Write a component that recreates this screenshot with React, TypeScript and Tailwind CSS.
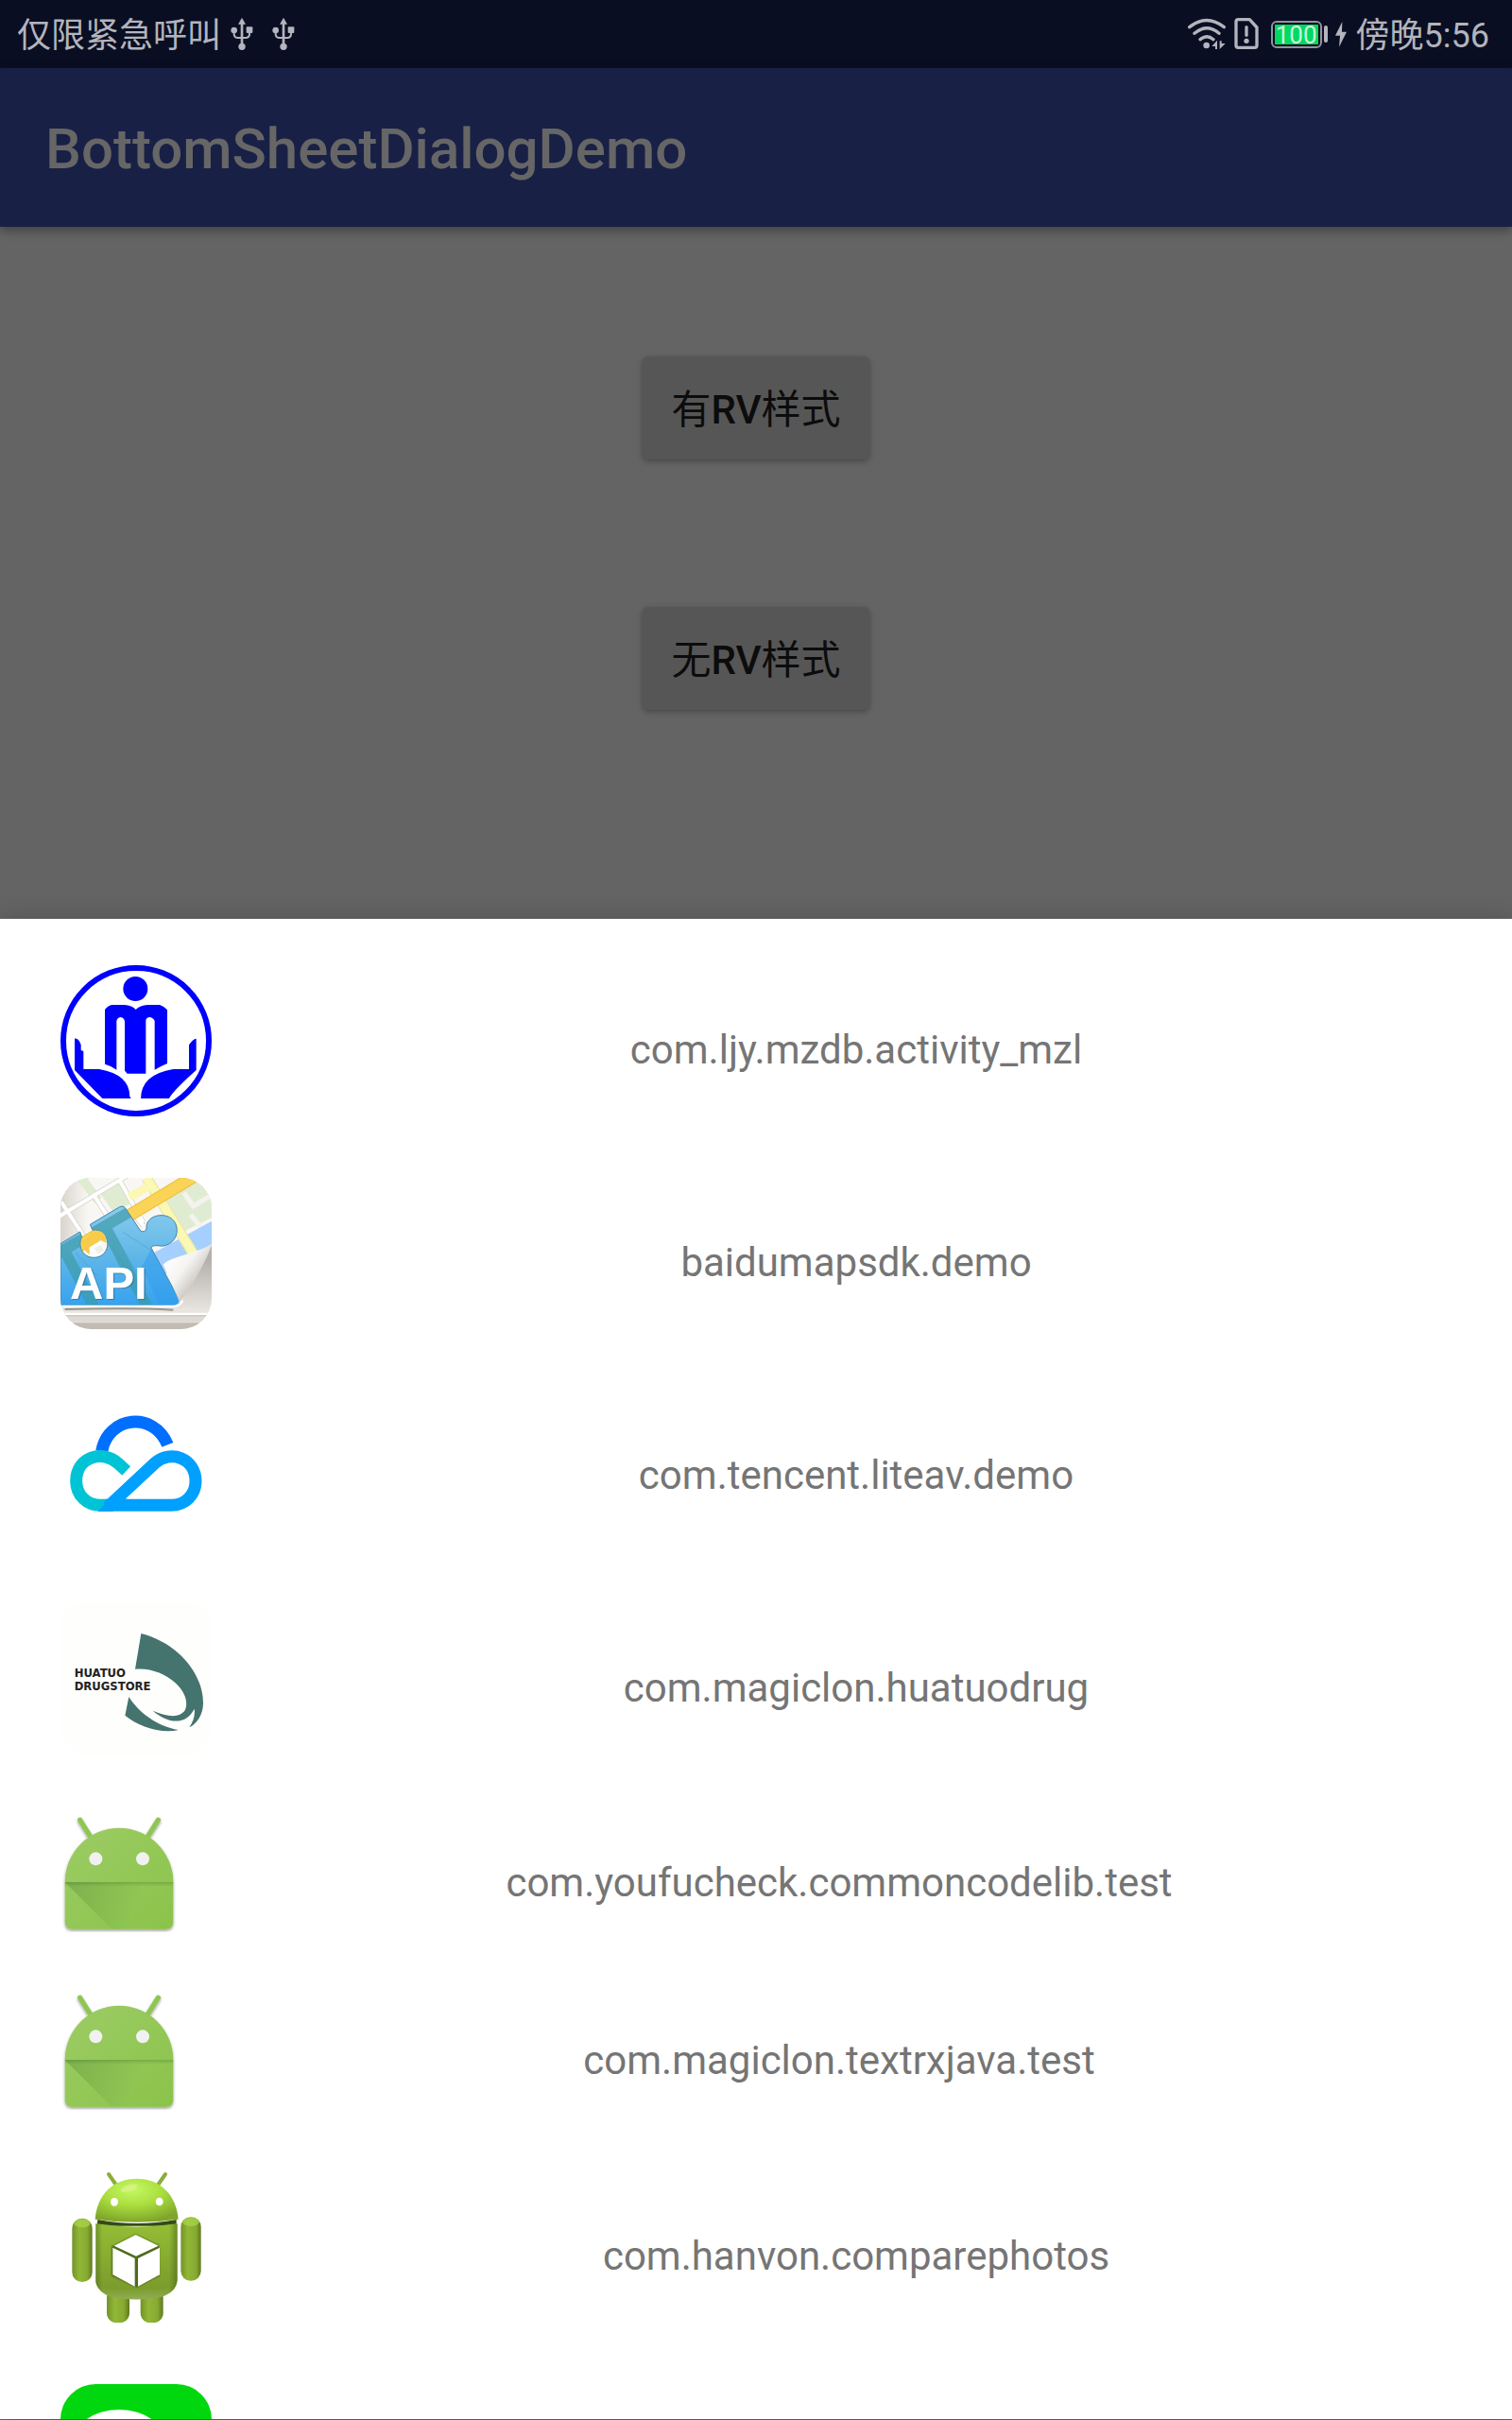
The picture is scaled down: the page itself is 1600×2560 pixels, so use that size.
import { useId, type ReactNode } from "react";

function UsbIcon() {
  return (
    <svg aria-hidden="true" className="h-9 w-6" viewBox="734 56 72 108" fill="#b3b4bd" stroke="#b3b4bd">
      <path d="M770 76V150" strokeWidth="8" fill="none" />
      <path d="M745 98V110Q745 121 756 122H784Q794 121 794 110V98" strokeWidth="6" fill="none" />
      <path d="M770 58L782 79H758Z" stroke="none" />
      <circle cx="745" cy="98" r="10" stroke="none" />
      <rect x="784" y="87" width="20" height="20" rx="3" stroke="none" />
      <circle cx="770" cy="150" r="11" stroke="none" />
    </svg>
  );
}

function WifiIcon() {
  return (
    <svg aria-hidden="true" className="h-9 w-10" viewBox="106 54 120 108" fill="none" stroke="#b3b4bd" strokeWidth="10" strokeLinecap="round">
      <path d="M111 86Q166 43 221 86" />
      <path d="M127 106Q166 73 205 106" />
      <path d="M145 125Q166 107 187 125" />
      <circle cx="165" cy="144" r="10" fill="#b3b4bd" stroke="none" />
      <path d="M199 128V156H193V147H182ZM207 156V130H213V138H225Z" fill="#b3b4bd" stroke="none" />
    </svg>
  );
}

function SimIcon() {
  return (
    <svg aria-hidden="true" className="h-9 w-7" viewBox="250 54 84 108" fill="none" stroke="#b3b4bd" strokeWidth="10">
      <path d="M266 62H302L325 87V144Q325 151 318 151H266Q259 151 259 144V69Q259 62 266 62Z" strokeLinejoin="round" />
      <path d="M292 86V112" strokeLinecap="round" />
      <circle cx="292" cy="130" r="8" fill="#b3b4bd" stroke="none" />
    </svg>
  );
}

function Battery() {
  return (
    <div className="flex items-center gap-0.5">
      <div className="flex h-[29px] w-[54px] rounded-md border-2 border-[#92939e] p-0.5">
        <span className="flex-1 bg-[#00d95f] text-center text-[26px] leading-[22px] text-[#c9f5da]">100</span>
      </div>
      <span className="h-[18px] w-1 rounded-sm bg-[#b3b4bd]" />
      <svg aria-hidden="true" className="ml-1 h-7 w-4" viewBox="578 64 44 84">
        <path d="M604 67L582 111H597L594 147L618 99H603Z" fill="#b3b4bd" />
      </svg>
    </div>
  );
}

function CivilIcon() {
  return (
    <svg aria-hidden="true" className="size-40" viewBox="72 183 480 480" fill="#0000ff">
      <circle cx="312" cy="423" r="231" fill="none" stroke="#0000ff" strokeWidth="18" />
      <circle cx="310" cy="258" r="39" />
      <path d="M213 324Q225 309 238 309H274Q300 311 311 324Q324 311 349 309H387Q400 313 411 325V495Q392 503 371 515V360Q366 349 354 348Q343 349 343 361V527H284L276 518V361Q274 350 263 348Q251 350 250 361V515Q235 503 213 497Z" />
      <path d="M117 416Q130 414 137 436V453L145 456V513H195Q292 530 292 600L296 606H205L117 516Z" />
      <path d="M503 416Q493 417 480 436V453V513H430Q328 530 327 606H417Q428 583 503 516Z" />
    </svg>
  );
}

function MapApiIcon() {
  return (
    <svg aria-hidden="true" className="size-40" viewBox="72 78 480 480">
      <defs>
        <clipPath id="map-tile"><rect x="72" y="78" width="480" height="480" rx="98" /></clipPath>
        <clipPath id="map-sheet"><path d="M72 78H552V290L450 482Q443 488 428 488H72Z" /></clipPath>
        <linearGradient id="puzzle" x1="0" y1="0" x2="0" y2="1">
          <stop offset="0" stopColor="#8bcbee" />
          <stop offset="0.45" stopColor="#64b9e8" />
          <stop offset="1" stopColor="#37a2ee" />
        </linearGradient>
        <linearGradient id="curl" x1="405" y1="340" x2="505" y2="415" gradientUnits="userSpaceOnUse">
          <stop offset="0" stopColor="#ffffff" />
          <stop offset="0.5" stopColor="#f5f4f2" />
          <stop offset="1" stopColor="#c9c4be" />
        </linearGradient>
        <linearGradient id="fold" x1="72" y1="0" x2="160" y2="0" gradientUnits="userSpaceOnUse">
          <stop offset="0" stopColor="#d9d4cd" />
          <stop offset="1" stopColor="#f9f7f3" />
        </linearGradient>
        <linearGradient id="paper" x1="0" y1="340" x2="0" y2="500" gradientUnits="userSpaceOnUse">
          <stop offset="0" stopColor="#b5b1ac" />
          <stop offset="1" stopColor="#e8e5e0" />
        </linearGradient>
        <path id="piece" d="M72 287L134 249L140 266C126 290 140 331 178 331C211 331 231 298 217 268C207 245 187 241 174 244L166 226L260 170Q271 164 278 174L326 246Q339 253 345 240C342 210 370 195 396 197C430 199 446 227 441 254C436 281 408 300 381 293Q358 292 361 302L449 464Q453 482 436 483H72Z" />
        <clipPath id="piece-clip"><use href="#piece" /></clipPath>
      </defs>
      <g clipPath="url(#map-tile)">
        <rect x="72" y="78" width="480" height="480" fill="url(#paper)" />
        <g clipPath="url(#map-sheet)">
          <rect x="72" y="78" width="480" height="410" fill="url(#fold)" />
          <path d="M127 88L156 78L202 140L182 160ZM194 122L262 88L306 152L242 190ZM392 150L490 88L552 100V205L450 255Z" fill="#dfecd2" />
          <path d="M464 125L495 168L552 132M485 195L518 235M470 135L494 168L520 150" fill="none" stroke="#f5f3ee" strokeWidth="15" />
          <path d="M370 315L552 215V310L400 385Z" fill="#a5cfff" />
          <path d="M60 205L285 70M175 128L250 245M75 155L150 270M262 90L335 220M290 175L335 230" fill="none" stroke="#d8d5cf" strokeWidth="17" />
          <path d="M60 205L285 70M175 128L250 245M75 155L150 270M262 90L335 220M290 175L335 230" fill="none" stroke="#fff" strokeWidth="12" />
          <path d="M345 78L510 345" stroke="#e9e6a7" strokeWidth="34" />
          <path d="M345 78L510 345M290 140L360 100" stroke="#fbf8b4" strokeWidth="27" />
          <path d="M120 300L505 68" stroke="#eebd3d" strokeWidth="40" />
          <path d="M120 300L505 68" stroke="#fad456" strokeWidth="34" />
        </g>
        <use href="#piece" fill="url(#puzzle)" stroke="#4086ad" strokeWidth="3" />
        <g clipPath="url(#piece-clip)" fill="none">
          <path d="M60 320L310 175M218 240L345 485M85 310L180 490" stroke="#3c9aa3" strokeOpacity="0.65" strokeWidth="35" />
          <path d="M235 290L325 440M250 270L345 430M270 250L370 315M120 315L190 390" stroke="#4598c1" strokeOpacity="0.5" strokeWidth="3" />
          <path d="M361 302L449 464V490H390L330 360Z" fill="#2f9bed" fillOpacity="0.5" />
        </g>
        <path d="M138 280L178 248Q205 240 216 266L218 285L200 276L164 298L166 322Q140 307 138 280Z" fill="#f9cb4b" />
        <path d="M164 299L198 280L214 309Q188 337 165 322Z" fill="#fff" />
        <path d="M180 301L200 290L211 309L190 320Z" fill="#f2efe8" />
        <path d="M398 354Q402 343 444 329Q525 307 554 286Q530 353 482 428Q447 487 421 490Q454 482 446 462Z" fill="url(#curl)" />
        <path d="M76 486H430Q448 486 460 468" fill="none" stroke="#fff" strokeWidth="7" />
        <path d="M86 490H430L555 498V560H60V505H95Z" fill="#e8e5df" />
        <path d="M86 495Q300 490 430 497" fill="none" stroke="#989590" strokeWidth="6" />
        <path d="M72 510H552" stroke="#fffefd" strokeWidth="8" />
        <path d="M72 516H552" stroke="#b6b2ac" strokeWidth="3" />
        <rect x="72" y="518" width="480" height="18" fill="#dedad3" />
        <rect x="72" y="538" width="480" height="22" fill="#c1bbb4" />
        <text x="106" y="465" fill="#2c6b93" fillOpacity="0.6" fontFamily="Liberation Sans" fontWeight="700" fontSize="147">API</text>
        <text x="102" y="461" fill="#fff" fontFamily="Liberation Sans" fontWeight="700" fontSize="147">API</text>
      </g>
    </svg>
  );
}

function CloudIcon() {
  return (
    <svg aria-hidden="true" className="size-40" viewBox="72 33 480 480" fill="none" strokeWidth="39">
      <path d="M203 226C222 114 368 97 412 205" stroke="#006eff" />
      <path d="M281 288L255 264C207 220 122 242 122 320C122 365 156 397 199 397H240" stroke="#00c4d5" />
      <path d="M215 397H424C470 397 501 362 501 321C501 247 421 220 372 263L222 403" stroke="#00a0ff" />
      <path d="M190 417L228 377H285L235 417Z" fill="#00a0ff" stroke="none" />
    </svg>
  );
}

function DrugstoreIcon() {
  return (
    <svg aria-hidden="true" className="size-40" viewBox="72 18 480 480" fill="#45736e">
      <rect x="72" y="18" width="480" height="480" rx="80" fill="#fefefc" />
      <path d="M328 114C448 145 526 244 525 337C524 370 508 399 481 412C494 393 500 373 497 353C470 407 413 400 365 359C412 379 450 383 467 358C493 300 403 218 309 227Z" />
      <path d="M289 315C319 363 378 409 447 420C391 433 317 408 277 374Z" />
      <g fill="#222" fontFamily="DejaVu Sans" fontWeight="700" fontSize="35">
        <text x="116" y="253">HUATUO</text>
        <text x="116" y="295">DRUGSTORE</text>
      </g>
    </svg>
  );
}

function RobotHeadIcon() {
  const id = useId();
  return (
    <svg aria-hidden="true" className="size-[124px]" viewBox="72 60 372 372">
      <defs>
        <linearGradient id={`${id}head`} x1="0" y1="0" x2="1" y2="1">
          <stop offset="0" stopColor="#9ccc65" />
          <stop offset="1" stopColor="#8bc34a" />
        </linearGradient>
        <linearGradient id={`${id}fade`} x1="100" y1="280" x2="310" y2="350" gradientUnits="userSpaceOnUse">
          <stop offset="0" stopColor="#33691e" stopOpacity="0.25" />
          <stop offset="1" stopColor="#33691e" stopOpacity="0" />
        </linearGradient>
        <linearGradient id={`${id}seam`} x1="0" y1="0" x2="0" y2="1">
          <stop offset="0" stopColor="#33691e" stopOpacity="0.28" />
          <stop offset="1" stopColor="#33691e" stopOpacity="0" />
        </linearGradient>
        <filter id={`${id}drop`} x="-10%" y="-10%" width="120%" height="120%">
          <feDropShadow dx="0" dy="5" stdDeviation="4" floodColor="#000" floodOpacity="0.4" />
        </filter>
      </defs>
      <g filter={`url(#${id}drop)`}>
        <path d="M134 76L170 133M382 76L346 133" stroke="#8fc652" strokeWidth="16" strokeLinecap="round" />
        <path d="M86 273A172 172 0 0 1 430 273V400Q430 422 408 422H108Q86 422 86 400Z" fill={`url(#${id}head)`} />
      </g>
      <path d="M86 273H430V422H235Z" fill={`url(#${id}fade)`} />
      <rect x="86" y="273" width="344" height="14" fill={`url(#${id}seam)`} />
      <circle cx="184" cy="199" r="21" fill="#f1f1f1" />
      <circle cx="333" cy="199" r="21" fill="#f1f1f1" />
    </svg>
  );
}

function RobotBoxIcon() {
  return (
    <svg aria-hidden="true" className="size-40" viewBox="72 81 480 480">
      <defs>
        <radialGradient id="dome" cx="0.45" cy="0.25" r="0.75">
          <stop offset="0" stopColor="#c4fb62" />
          <stop offset="0.5" stopColor="#a9dc3e" />
          <stop offset="1" stopColor="#7fa62c" />
        </radialGradient>
        <linearGradient id="torso" x1="0" y1="0" x2="0" y2="1">
          <stop offset="0" stopColor="#95bd35" />
          <stop offset="0.85" stopColor="#7b9c2c" />
          <stop offset="1" stopColor="#91ad55" />
        </linearGradient>
        <linearGradient id="limb" x1="0" y1="0" x2="1" y2="0">
          <stop offset="0" stopColor="#739329" />
          <stop offset="0.35" stopColor="#91b736" />
          <stop offset="0.75" stopColor="#87aa31" />
          <stop offset="1" stopColor="#5d7820" />
        </linearGradient>
        <linearGradient id="side-shade" x1="0" y1="0" x2="1" y2="0">
          <stop offset="0" stopColor="#405716" stopOpacity="0.45" />
          <stop offset="0.08" stopColor="#405716" stopOpacity="0" />
          <stop offset="0.9" stopColor="#405716" stopOpacity="0" />
          <stop offset="1" stopColor="#405716" stopOpacity="0.5" />
        </linearGradient>
      </defs>
      <path d="M225 90L248 123M405 90L382 123" stroke="#8bad3b" strokeWidth="12" strokeLinecap="round" />
      <rect x="219" y="450" width="72" height="112" rx="32" fill="url(#limb)" />
      <rect x="326" y="450" width="72" height="112" rx="32" fill="url(#limb)" />
      <rect x="109" y="230" width="64" height="202" rx="31" fill="url(#limb)" />
      <rect x="454" y="226" width="64" height="202" rx="31" fill="url(#limb)" />
      <ellipse cx="141" cy="246" rx="26" ry="13" fill="#a9d94a" fillOpacity="0.7" />
      <ellipse cx="486" cy="242" rx="26" ry="13" fill="#a9d94a" fillOpacity="0.7" />
      <path d="M190 234Q314 258 440 234V254H188Z" fill="#354a16" />
      <path d="M184 247Q314 266 443 247V425Q440 465 390 480Q313 495 235 480Q190 465 184 432Z" fill="url(#torso)" />
      <path d="M184 247Q314 266 443 247V425Q440 465 390 480Q313 495 235 480Q190 465 184 432Z" fill="url(#side-shade)" />
      <path d="M182 233C188 153 240 104 314 104C389 104 440 156 446 233Q314 252 182 233Z" fill="url(#dome)" />
      <ellipse cx="290" cy="134" rx="28" ry="10" transform="rotate(-18 290 134)" fill="#e7efa0" fillOpacity="0.55" />
      <ellipse cx="243" cy="178" rx="12" ry="13" fill="#fff" />
      <ellipse cx="386" cy="177" rx="12" ry="13" fill="#fff" />
      <path d="M311 282L384 317V412L314 448L236 412V320Z" fill="#4f6b1c" stroke="#4f6b1c" strokeOpacity="0.4" strokeWidth="8" />
      <path d="M311 282L383 317L312 350L242 317Z" fill="#fff" />
      <path d="M238 323L308 357V446L238 409Z" fill="#fff" />
      <path d="M387 323L318 357V446L387 409Z" fill="#fff" />
    </svg>
  );
}

function GreenChatIcon() {
  return (
    <svg aria-hidden="true" className="size-40" viewBox="72 756 480 480">
      <rect x="72" y="756" width="480" height="480" rx="112" fill="#00d70f" />
      <ellipse cx="258" cy="958" rx="156" ry="121" fill="#fff" />
    </svg>
  );
}

const apps: { name: string; icon: ReactNode; compact?: boolean }[] = [
  { name: "com.ljy.mzdb.activity_mzl", icon: <CivilIcon /> },
  { name: "baidumapsdk.demo", icon: <MapApiIcon /> },
  { name: "com.tencent.liteav.demo", icon: <CloudIcon /> },
  { name: "com.magiclon.huatuodrug", icon: <DrugstoreIcon /> },
  { name: "com.youfucheck.commoncodelib.test", icon: <RobotHeadIcon />, compact: true },
  { name: "com.magiclon.textrxjava.test", icon: <RobotHeadIcon />, compact: true },
  { name: "com.hanvon.comparephotos", icon: <RobotBoxIcon /> },
  { name: "", icon: <GreenChatIcon /> },
];

function RaisedButton({ children }: { children: ReactNode }) {
  return (
    <button
      type="button"
      className="h-[109px] rounded-md bg-[#565656] px-[30px] pt-1 text-[42px] leading-none text-[#0c0c0c] shadow-[0_2px_6px_rgba(0,0,0,0.3)]"
    >
      {children}
    </button>
  );
}

export default function App() {
  return (
    <div className="flex h-screen flex-col overflow-hidden bg-[#646464] pb-px font-['Roboto','Noto_Sans_CJK_SC',sans-serif]">
      <div className="flex h-[72px] shrink-0 items-center justify-between bg-[#090e22] pr-6 pl-[18px] text-[36px] leading-none text-[#b3b4bd]">
        <div className="flex items-center">
          <span className="pt-1">仅限紧急呼叫</span>
          <span className="ml-2.5 flex gap-5">
            <UsbIcon />
            <UsbIcon />
          </span>
        </div>
        <div className="flex items-center">
          <WifiIcon />
          <span className="mr-3 ml-2"><SimIcon /></span>
          <Battery />
          <span className="ml-2 pt-1">傍晚5:56</span>
        </div>
      </div>
      <header className="z-10 flex h-[168px] shrink-0 items-center bg-[#192046] px-12 pt-1 shadow-[0_4px_10px_rgba(0,0,0,0.35)]">
        <h1 className="text-[60px] leading-none font-medium text-[#666666]">BottomSheetDialogDemo</h1>
      </header>
      <main className="flex h-[732px] shrink-0 flex-col items-center gap-[156px] pt-[137px]">
        <RaisedButton>有<span className="font-medium">RV</span>样式</RaisedButton>
        <RaisedButton>无<span className="font-medium">RV</span>样式</RaisedButton>
      </main>
      <section role="dialog" aria-label="Applications" className="min-h-0 flex-1 overflow-hidden bg-white pt-4 shadow-[0_0_24px_rgba(0,0,0,0.2)]">
        <ul>
          {apps.map((app, i) => (
            <li key={i} className={app.compact ? "flex h-[188px] items-center pr-3 pl-16" : "flex h-[225px] items-center pr-3 pl-16"}>
              {app.icon}
              <span className="flex-1 pt-5 text-center text-[42px] leading-[48px] text-[#757575]">{app.name}</span>
            </li>
          ))}
        </ul>
      </section>
    </div>
  );
}
